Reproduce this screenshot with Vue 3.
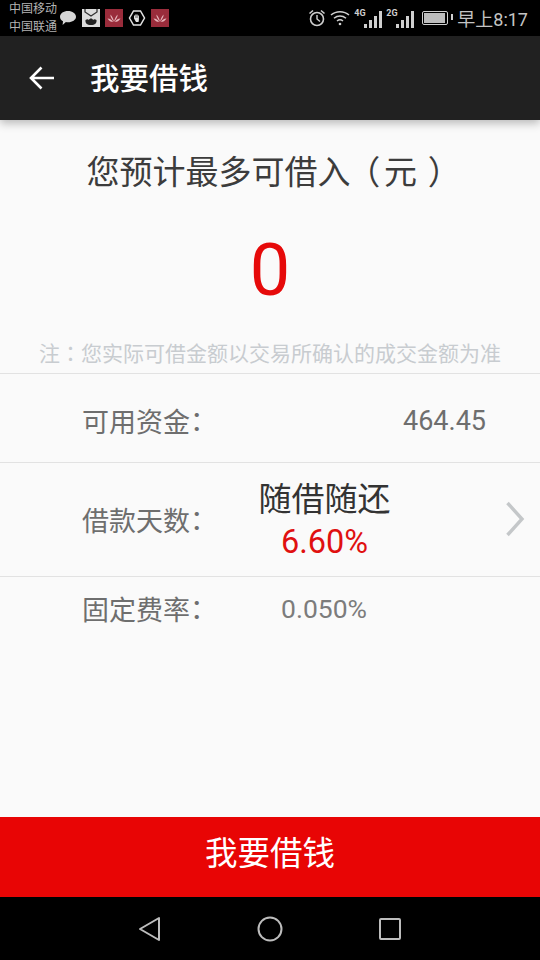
<script setup>
const carriers = ['中国移动', '中国联通']
</script>

<template>
  <div class="page">
    <header class="status">
      <div class="status-left">
        <div class="carriers">
          <span v-for="c in carriers" :key="c">{{ c }}</span>
        </div>
        <svg class="ic-wechat" width="18" height="16" viewBox="0 0 18 16"><path d="M9 1C4.600 1 1 3.400 1 6.700c0 2 1.300 3.500 3 4.500L3.600 15l3.300-3c.7.100 1.400.2 2.100.2 4.400 0 8-2.400 8-5.500S13.400 1 9 1z" fill="#d6d6d6"/></svg>
        <svg width="18" height="18" viewBox="0 0 18 18"><rect width="18" height="18" fill="#dcdcdc"/><path d="M3 0v3l6 4 6-4V0" fill="none" stroke="#333" stroke-width="1.300"/><path d="M9 16C5 16 3 14 3.500 11 5 10 6 10 7 11c.5-2 3.500-2 4 0 1-1 2-1 3.500 0 .5 3-1.500 5-5.500 5z" fill="#222"/></svg>
        <svg width="18" height="18" viewBox="0 0 18 18"><rect width="18" height="18" fill="#9a2c3b"/><path d="M9 13C7 10 5 8 5.500 5.500 7 7 8.500 10 9 13c.5-3 2-6 3.500-7.500C13 8 11 10 9 13zM8 13c-2 0-4-1-5.500-3.500C5 9.500 7 11 8 13zm2 0c2 0 4-1 5.500-3.500C13 9.500 11 11 10 13z" fill="#e8b7bd"/></svg>
        <svg width="18" height="18" viewBox="0 0 18 18"><path d="M5.500 2h7L16.500 9l-4 7h-7l-4-7z" fill="none" stroke="#e4e4e4" stroke-width="1.500"/><path d="M6 9.500V6.500h1V9h.3V5.500h1V9h.3V5.500h1V9h.3V6.500h1v4.500L10.500 13H8z" fill="#e4e4e4"/></svg>
        <svg width="18" height="18" viewBox="0 0 18 18"><rect width="18" height="18" fill="#9a2c3b"/><path d="M9 13C7 10 5 8 5.500 5.500 7 7 8.500 10 9 13c.5-3 2-6 3.500-7.500C13 8 11 10 9 13zM8 13c-2 0-4-1-5.500-3.500C5 9.500 7 11 8 13zm2 0c2 0 4-1 5.500-3.500C13 9.500 11 11 10 13z" fill="#e8b7bd"/></svg>
      </div>
      <div class="status-right">
        <svg width="18" height="18" viewBox="0 0 18 18" fill="none" stroke="#cfcfcf"><circle cx="9" cy="10" r="6.500" stroke-width="1.600"/><path d="M9 6v4l3 2.500" stroke-width="1.400"/><path d="M1.500 4.500L5 1.500M16.500 4.500L13 1.500" stroke-width="1.600"/></svg>
        <svg width="20" height="16" viewBox="0 0 20 16" fill="none" stroke="#cfcfcf" stroke-width="1.500"><path d="M1 5c5-4.500 13-4.500 18 0M4 8.200c3.500-3 8.500-3 12 0M7 11c1.800-1.400 4.200-1.400 6 0"/><circle cx="10" cy="14" r="1.300" fill="#cfcfcf" stroke="none"/></svg>
        <div class="signal">
          <span class="net">4G</span>
          <i class="b1"></i><i class="b2"></i><i class="b3"></i><i class="b4"></i>
        </div>
        <div class="signal">
          <span class="net">2G</span>
          <i class="b1"></i><i class="b2"></i><i class="b3"></i><i class="b4"></i>
        </div>
        <div class="battery"><span class="level"></span></div>
        <span class="clock">早上8:17</span>
      </div>
    </header>

    <div class="toolbar">
      <svg class="back" width="26" height="24" viewBox="0 0 26 24" fill="none" stroke="#fff" stroke-width="2.600"><path d="M25 12H2M12.500 1.500L2 12l10.500 10.500"/></svg>
      <h1>我要借钱</h1>
    </div>

    <main class="content">
      <section class="summary">
        <p class="heading">您预计最多可借入<span class="p open">（</span>元<span class="p close">）</span></p>
        <p class="amount">0</p>
        <p class="note">注<span class="p">：</span>您实际可借金额以交易所确认的成交金额为准</p>
      </section>

      <div class="row row-funds">
        <span class="label">可用资金<span class="p colon">：</span></span>
        <span class="funds">464.45</span>
      </div>
      <div class="row row-days">
        <span class="label">借款天数<span class="p colon">：</span></span>
        <div class="days">
          <span class="days-name">随借随还</span>
          <span class="days-rate">6.60%</span>
        </div>
        <svg class="chevron" width="20" height="36" viewBox="0 0 20 36" fill="none" stroke="#c4c7c9" stroke-width="3.400"><path d="M2.500 2L17 18 2.500 34"/></svg>
      </div>
      <div class="row row-fee">
        <span class="label">固定费率<span class="p colon">：</span></span>
        <span class="fee">0.050%</span>
      </div>
    </main>

    <button class="cta"><span>我要借钱</span></button>

    <nav class="navbar">
      <svg width="24" height="26" viewBox="0 0 24 26" fill="none" stroke="#bdbdbd" stroke-width="2" stroke-linejoin="round"><path d="M21 2v22L2 13z"/></svg>
      <svg width="26" height="26" viewBox="0 0 26 26" fill="none" stroke="#bdbdbd" stroke-width="2"><circle cx="13" cy="13" r="11.500"/></svg>
      <svg width="24" height="24" viewBox="0 0 24 24" fill="none" stroke="#bdbdbd" stroke-width="2" stroke-linejoin="round"><rect x="2" y="2" width="20" height="20" rx="1"/></svg>
    </nav>
  </div>
</template>

<style>
body { margin: 0; background: #fafafa; }
</style>

<style scoped>
.page {
  width: 540px;
  height: 960px;
  display: flex;
  flex-direction: column;
  overflow: hidden;
  background: #fafafa;
  font-family: "Roboto", "Noto Sans CJK SC", sans-serif;
}
.p { font-family: "Noto Sans CJK TC", sans-serif; }
.open { font-feature-settings: "palt"; margin: 0 5px 0 12px; }
.close { font-feature-settings: "palt"; margin: 0 8px 0 12px; }
.colon { font-feature-settings: "palt"; margin-left: 0; }
.status {
  height: 36px;
  flex: none;
  background: #000;
  display: flex;
  align-items: center;
  justify-content: space-between;
  padding: 0 12px 0 9px;
  box-sizing: border-box;
}
.status-left { display: flex; align-items: center; }
.status-left svg { margin-right: 5px; }
.carriers {
  display: flex;
  flex-direction: column;
  width: 50px;
  font-size: 12px;
  line-height: 18px;
  color: #b4b4b4;
}
.status-right { display: flex; align-items: center; gap: 4px; }
.signal {
  position: relative;
  width: 28px;
  height: 20px;
  display: flex;
  align-items: flex-end;
  justify-content: flex-end;
  gap: 2px;
}
.net {
  position: absolute;
  left: 0;
  top: 0;
  font-size: 9px;
  line-height: 10px;
  font-weight: 700;
  color: #cfcfcf;
}
.signal i { width: 3px; background: #cfcfcf; display: block; }
.b1 { height: 4px; }
.b2 { height: 8px; }
.b3 { height: 12px; }
.b4 { height: 17px; }
.battery {
  position: relative;
  width: 22px;
  height: 10px;
  border: 1.500px solid #cfcfcf;
  border-radius: 2px;
  padding: 1px;
  margin: 0 5px 0 4px;
  box-sizing: content-box;
}
.battery::after {
  content: "";
  position: absolute;
  right: -6px;
  top: 2px;
  width: 2px;
  height: 6px;
  background: #cfcfcf;
}
.level { display: block; height: 100%; width: 92%; background: #bdbdbd; }
.clock { font-size: 18px; color: #c4c4c4; }

.toolbar {
  height: 84px;
  flex: none;
  background: #212121;
  display: flex;
  align-items: center;
  box-shadow: 0 3px 9px rgba(0,0,0,.28);
  position: relative;
  z-index: 1;
}
.back { margin-left: 29px; }
.toolbar h1 {
  margin: -4px 0 0 35px;
  font-size: 29.500px;
  font-weight: 500;
  color: #fff;
}

.content { flex: 1; min-height: 0; display: flex; flex-direction: column; }
.summary { height: 254px; flex: none; display: flex; flex-direction: column; align-items: center; border-bottom: 1px solid #e2e2e2; box-sizing: border-box; }
.summary p { margin: 0; }
.heading { margin-top: 28px !important; font-size: 33px; line-height: 44px; color: #3c3c3c; white-space: nowrap; }
.amount { margin-top: 34px !important; font-size: 72px; line-height: 84px; color: #e60a0a; }
.note { margin-top: 24px !important; font-size: 21px; line-height: 30px; color: #c8ccd0; white-space: nowrap; }

.row {
  display: flex;
  align-items: center;
  padding-left: 82px;
  box-sizing: border-box;
  position: relative;
}
.row-funds { height: 89px; border-bottom: 1px solid #e2e2e2; padding-top: 5px; }
.row-days { height: 114px; border-bottom: 1px solid #e2e2e2; padding-bottom: 1px; }
.row-fee { height: 65px; padding-bottom: 3px; }
.label { font-size: 27px; color: #6e6e6e; white-space: nowrap; }
.funds { position: absolute; right: 54px; font-size: 27px; color: #6e6e6e; }
.days {
  position: absolute;
  left: 259px;
  width: 131px;
  top: 16px;
  display: flex;
  flex-direction: column;
  align-items: center;
}
.days-name { font-size: 33px; line-height: 42px; color: #333; white-space: nowrap; }
.days-rate { font-size: 32.500px; line-height: 42px; color: #e01010; }
.chevron { position: absolute; left: 505px; top: 38px; }
.fee { position: absolute; left: 281px; font-size: 26.500px; color: #7c7c7c; }

.cta {
  height: 80px;
  flex: none;
  border: 0;
  padding: 0 0 14px;
  background: #e80505;
  color: #fff;
  font-family: inherit;
  font-size: 32.500px;
}
.navbar {
  height: 63px;
  flex: none;
  background: #000;
  display: flex;
  align-items: center;
  justify-content: center;
  gap: 95px;
}
</style>
